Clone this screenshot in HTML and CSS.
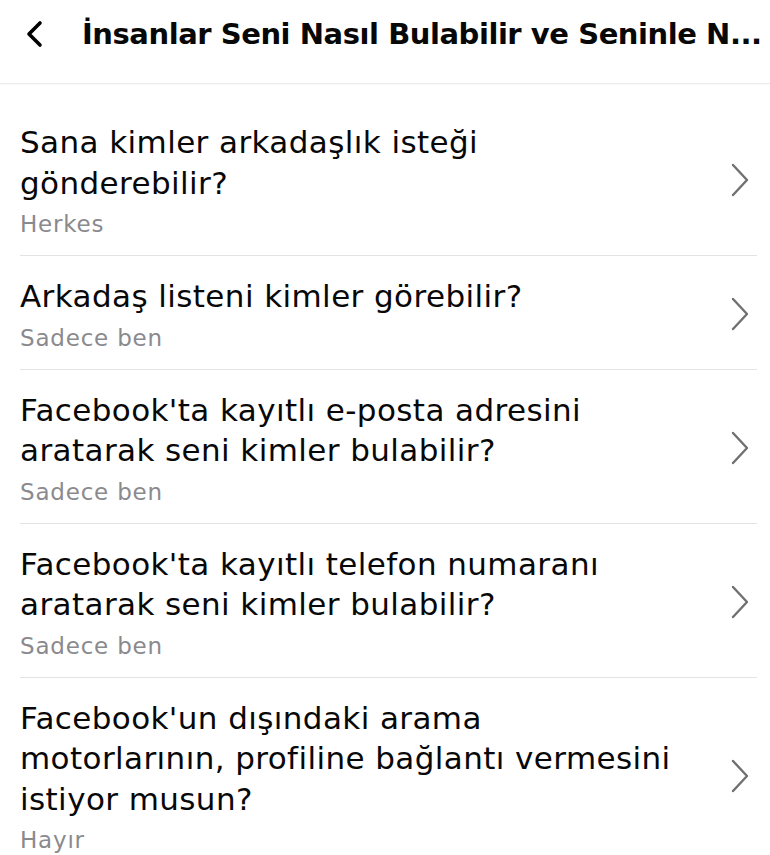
FILE: index.html
```html
<!DOCTYPE html>
<html>
<head>
  <meta charset="utf-8">
  <title>İnsanlar Seni Nasıl Bulabilir</title>
  <link rel="stylesheet" href="styles.css">
</head>
<body>
  <div class="top-bar">
    <svg class="back" width="22" height="28" viewBox="0 0 22 28">
      <path d="M17 3 L6 14 L17 25" fill="none" stroke="#000" stroke-width="3.6" stroke-linecap="round" stroke-linejoin="round"/>
    </svg>
    <h1>İnsanlar Seni Nasıl Bulabilir ve Seninle N...</h1>
  </div>

  <div class="settings-list">
    <div class="row">
      <div class="row-text">
        <div class="row-title">Sana kimler arkadaşlık isteği<br>gönderebilir?</div>
        <div class="row-value">Herkes</div>
      </div>
      <svg class="chevron" width="20" height="36" viewBox="0 0 20 36">
        <path d="M3 3 L17 18 L3 33" fill="none" stroke="#707070" stroke-width="2.4" stroke-linecap="round" stroke-linejoin="round"/>
      </svg>
    </div>

    <div class="row">
      <div class="row-text">
        <div class="row-title">Arkadaş listeni kimler görebilir?</div>
        <div class="row-value">Sadece ben</div>
      </div>
      <svg class="chevron" width="20" height="36" viewBox="0 0 20 36">
        <path d="M3 3 L17 18 L3 33" fill="none" stroke="#707070" stroke-width="2.4" stroke-linecap="round" stroke-linejoin="round"/>
      </svg>
    </div>

    <div class="row">
      <div class="row-text">
        <div class="row-title">Facebook'ta kayıtlı e-posta adresini<br>aratarak seni kimler bulabilir?</div>
        <div class="row-value">Sadece ben</div>
      </div>
      <svg class="chevron" width="20" height="36" viewBox="0 0 20 36">
        <path d="M3 3 L17 18 L3 33" fill="none" stroke="#707070" stroke-width="2.4" stroke-linecap="round" stroke-linejoin="round"/>
      </svg>
    </div>

    <div class="row">
      <div class="row-text">
        <div class="row-title">Facebook'ta kayıtlı telefon numaranı<br>aratarak seni kimler bulabilir?</div>
        <div class="row-value">Sadece ben</div>
      </div>
      <svg class="chevron" width="20" height="36" viewBox="0 0 20 36">
        <path d="M3 3 L17 18 L3 33" fill="none" stroke="#707070" stroke-width="2.4" stroke-linecap="round" stroke-linejoin="round"/>
      </svg>
    </div>

    <div class="row">
      <div class="row-text">
        <div class="row-title">Facebook'un dışındaki arama<br>motorlarının, profiline bağlantı vermesini<br>istiyor musun?</div>
        <div class="row-value">Hayır</div>
      </div>
      <svg class="chevron" width="20" height="36" viewBox="0 0 20 36">
        <path d="M3 3 L17 18 L3 33" fill="none" stroke="#707070" stroke-width="2.4" stroke-linecap="round" stroke-linejoin="round"/>
      </svg>
    </div>
  </div>
</body>
</html>
```

FILE: styles.css
```css
body {
  margin: 0;
  background-color: #fff;
  font-family: "DejaVu Sans", "Liberation Sans", sans-serif;
  color: #080808;
  overflow: hidden;
}
.top-bar {
  display: flex;
  align-items: center;
  height: 40px;
  padding: 14px 0 29px 23px;
  border-bottom: 1px solid #ececec;
  box-shadow: 0 1px 2px rgba(0, 0, 0, 0.03);
}
.back {
  flex-shrink: 0;
  margin-right: 37px;
}
.top-bar h1 {
  margin: 0;
  font-size: 29px;
  line-height: 40px;
  font-weight: bold;
  letter-spacing: -0.45px;
  white-space: nowrap;
}
.settings-list {
  padding-top: 18px;
}
.row {
  display: flex;
  align-items: center;
  margin: 0 13px 0 20px;
  padding: 20px 7px 17px 0;
  border-bottom: 1px solid #e3e3e3;
}
.row-text {
  flex: 1;
}
.row-title {
  font-size: 31px;
  line-height: 40.5px;
  letter-spacing: 0.4px;
}
.row-value {
  margin-top: 7px;
  font-size: 23px;
  line-height: 28px;
  letter-spacing: 0.8px;
  color: #8a8a8e;
}
.chevron {
  flex-shrink: 0;
}
```
